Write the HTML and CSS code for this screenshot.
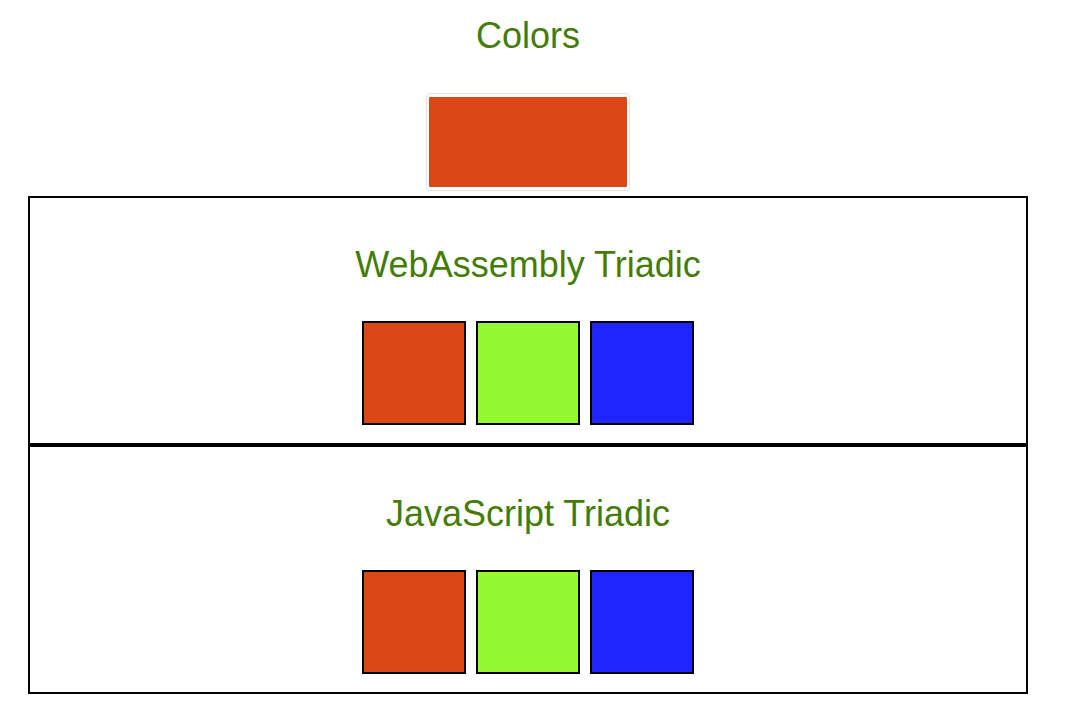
FILE: index.html
```html
<!doctype html>
<html lang="en">
<head>
<meta charset="utf-8" />
<title>Colors</title>
<link rel="stylesheet" href="styles.css">
</head>

<body>

<div id="page">

<h2 class="title top">Colors</h2>
<div class="picker-row"><div class="picker"><div class="picker-fill"></div></div></div>

<div class="scheme">
<h2 class="title">WebAssembly Triadic</h2>
<div class="swatches">
<div class="swatch red"></div><div class="swatch green"></div><div class="swatch blue"></div>
</div>
</div>

<div class="scheme">
<h2 class="title">JavaScript Triadic</h2>
<div class="swatches">
<div class="swatch red"></div><div class="swatch green"></div><div class="swatch blue"></div>
</div>
</div>

</div>

</body>
</html>
```

FILE: styles.css
```css
body{margin:8px;padding:0;font-family:"Liberation Sans",Arial,sans-serif;background:#fff}

#page{width:1000px;margin:0 20px}

.title{margin:46px 0 36px;font-size:36px;line-height:41px;font-weight:normal;text-align:center;color:#457c08}
.title.top{margin:7px 0 37px}

.picker-row{display:flex;justify-content:center;margin-bottom:5px}
.picker{width:198px;height:90px;border:1px solid #e2e2e2;border-radius:4px;padding:3px 2px;background:#fff}
.picker-fill{width:100%;height:100%;background:#dc4716;border-radius:1px}

.scheme{border:2px solid #000;height:245px}

.swatches{display:flex;justify-content:center;gap:10px}
.swatch{width:100px;height:100px;border:2px solid #000}

.red{background:#dc4716}
.green{background:#95f931}
.blue{background:#2024ff}
```
